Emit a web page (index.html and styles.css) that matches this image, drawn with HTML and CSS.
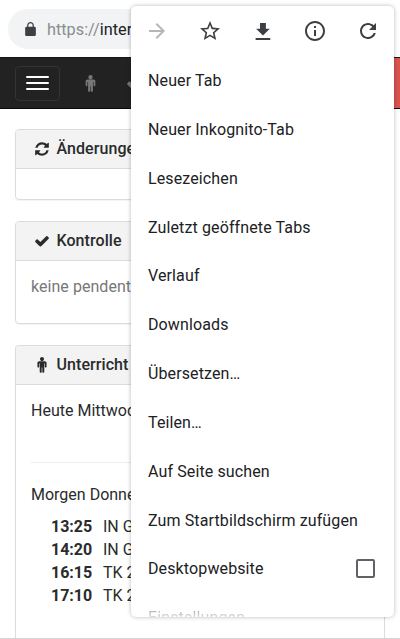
FILE: index.html
```html
<!DOCTYPE html>
<html lang="de">
<head>
<meta charset="utf-8">
<title>Intern</title>
<link rel="stylesheet" href="styles.css">
</head>
<body>
<svg class="defs" aria-hidden="true">
  <symbol id="male" viewBox="0 0 1792 1792"><path d="M1408 672v416q0 40-28 68t-68 28-68-28-28-68v-352h-64v912q0 46-33 79t-79 33-79-33-33-79v-464h-64v464q0 46-33 79t-79 33-79-33-33-79v-912h-64v352q0 40-28 68t-68 28-68-28-28-68v-416q0-80 56-136t136-56h640q80 0 136 56t56 136zm-288-448q0 93-65.500 158.500t-158.500 65.500-158.500-65.500-65.500-158.500 65.500-158.500 158.500-65.500 158.500 65.500 65.500 158.500z"/></symbol>
  <symbol id="check" viewBox="0 0 1792 1792"><path d="M1671 566q0 40-28 68l-724 724-136 136q-28 28-68 28t-68-28l-136-136-362-362q-28-28-28-68t28-68l136-136q28-28 68-28t68 28l294 295 656-657q28-28 68-28t68 28l136 136q28 28 28 68z"/></symbol>
</svg>
<header class="toolbar">
  <div class="address">
    <svg class="lock" viewBox="4 1 16 21"><path d="M18 8h-1V6c0-2.760-2.240-5-5-5S7 3.240 7 6v2H6c-1.100 0-2 .9-2 2v10c0 1.100.9 2 2 2h12c1.100 0 2-.9 2-2V10c0-1.100-.9-2-2-2zM8.900 8V6c0-1.710 1.390-3.100 3.100-3.100s3.100 1.390 3.100 3.100v2z"/></svg>
    <span class="url">https://<b>intern</b></span>
  </div>
</header>
<nav class="navbar">
  <div class="toggle"><i></i><i></i><i></i></div>
  <svg class="nav-icon"><use href="#male"/></svg>
  <svg class="nav-icon"><use href="#check"/></svg>
  <div class="alert"></div>
</nav>
<main class="content">
  <section class="panel changes">
    <h2><svg viewBox="0 0 1792 1792"><path d="M1639 1056q0 5-1 7-64 268-268 434.500t-478 166.500q-146 0-282.500-55t-243.500-157l-129 129q-19 19-45 19t-45-19-19-45v-448q0-26 19-45t45-19h448q26 0 45 19t19 45-19 45l-137 137q71 66 161 102t187 36q134 0 250-65t186-179q11-17 53-117 8-23 30-23h192q13 0 22.500 9.500t9.500 22.500zm25-800v448q0 26-19 45t-45 19h-448q-26 0-45-19t-19-45 19-45l138-138q-148-137-349-137-134 0-250 65t-186 179q-11 17-53 117-8 23-30 23h-199q-13 0-22.500-9.500t-9.500-22.500v-7q65-268 270-434.500t480-166.500q146 0 284 55.500t245 156.500l130-129q19-19 45-19t45 19 19 45z"/></svg>Änderungen</h2>
  </section>
  <section class="panel control">
    <h2><svg><use href="#check"/></svg>Kontrolle</h2>
    <p class="muted">keine pendenten</p>
  </section>
  <section class="panel lessons">
    <h2><svg><use href="#male"/></svg>Unterricht</h2>
    <p class="today">Heute Mittwoch</p>
    <hr>
    <p>Morgen Donnerstag</p>
    <dl>
      <dt>13:25</dt><dd>IN G</dd>
      <dt>14:20</dt><dd>IN G</dd>
      <dt>16:15</dt><dd>TK 2</dd>
      <dt>17:10</dt><dd>TK 2</dd>
    </dl>
  </section>
</main>
<footer class="bottom"></footer>
<aside class="menu">
  <div class="actions">
    <svg class="disabled" viewBox="0 0 24 24"><path d="M12 4l-1.410 1.410L16.170 11H4v2h12.170l-5.580 5.590L12 20l8-8z"/></svg>
    <svg viewBox="0 0 24 24"><path d="M22 9.240l-7.190-.62L12 2 9.190 8.630 2 9.240l5.460 4.730L5.820 21 12 17.270 18.180 21l-1.630-7.030L22 9.240zM12 15.400l-3.760 2.270 1-4.280-3.320-2.880 4.380-.38L12 6.100l1.710 4.040 4.380.38-3.320 2.880 1 4.280L12 15.400z"/></svg>
    <svg viewBox="0 0 24 24"><path d="M18.800 9.700h-3.900V4H9v5.700H5.100l6.900 6.900zM4.600 19v2h14.700v-2z"/></svg>
    <svg viewBox="0 0 24 24"><path d="M11 7h2v2h-2zm0 4h2v6h-2zm1-9C6.480 2 2 6.480 2 12s4.480 10 10 10 10-4.480 10-10S17.520 2 12 2zm0 18c-4.410 0-8-3.590-8-8s3.590-8 8-8 8 3.590 8 8-3.590 8-8 8z"/></svg>
    <svg viewBox="0 0 24 24"><path d="M17.650 6.350C16.200 4.900 14.210 4 12 4c-4.420 0-7.990 3.580-7.990 8s3.570 8 7.990 8c3.730 0 6.840-2.550 7.730-6h-2.080c-.82 2.330-3.040 4-5.650 4-3.310 0-6-2.690-6-6s2.690-6 6-6c1.660 0 3.140.69 4.220 1.780L13 11h7V4l-2.350 2.350z"/></svg>
  </div>
  <ul>
    <li>Neuer Tab</li>
    <li>Neuer Inkognito-Tab</li>
    <li>Lesezeichen</li>
    <li>Zuletzt geöffnete Tabs</li>
    <li>Verlauf</li>
    <li>Downloads</li>
    <li>Übersetzen…</li>
    <li>Teilen…</li>
    <li>Auf Seite suchen</li>
    <li>Zum Startbildschirm zufügen</li>
    <li>Desktopwebsite<span class="box"></span></li>
    <li class="fading">Einstellungen</li>
  </ul>
</aside>
</body>
</html>
```
FILE: styles.css
```css
* { box-sizing: border-box; }
body {
  margin: 0;
  height: 639px;
  overflow: hidden;
  position: relative;
  display: flex;
  flex-direction: column;
  background: #fff;
  color: #292b2c;
  font: 16px/24px Roboto, sans-serif;
}
.defs { position: absolute; width: 0; height: 0; }
svg { fill: currentColor; flex: none; }
p, ul, dl, dd { margin: 0; padding: 0; }
.toolbar { height: 57px; padding: 9px 8px; flex: none; }
.address {
  display: flex;
  align-items: center;
  height: 40px;
  border-radius: 20px;
  background: #f1f3f4;
  padding-left: 17px;
  white-space: nowrap;
}
.lock { width: 11px; height: 14px; color: #3c4043; margin-top: -1px; }
.url { margin-left: 11px; color: #8a8d90; font-size: 16.3px; margin-top: 1px; }
.url b { font-weight: 400; color: #202124; }
.navbar {
  flex: none;
  height: 52px;
  display: flex;
  align-items: center;
  background: #222;
  border-top: 1px solid #161616;
  border-bottom: 1px solid #090909;
  padding-left: 15px;
  color: #777;
}
.toggle {
  width: 45px;
  height: 35px;
  border: 1px solid #333;
  border-radius: 4px;
  display: flex;
  flex-direction: column;
  justify-content: center;
  align-items: center;
  gap: 4px;
}
.toggle i { width: 23px; height: 2px; background: #fff; border-radius: 1px; }
.nav-icon { width: 17px; height: 17px; margin-left: 22px; }
.nav-icon + .nav-icon { margin-left: 27px; }
.alert { align-self: stretch; width: 20px; margin-left: auto; background: #d9534f; }
.content { padding: 19.500px 15px 0; flex: 1; min-height: 0; display: flex; flex-direction: column; gap: 20px; }
.panel { border: 1px solid #dcdcdc; border-radius: 4px; padding: 0 15px; flex: none; box-shadow: 0 1px 1px rgba(0,0,0,.05); overflow: hidden; }
.panel h2 {
  display: flex;
  align-items: center;
  margin: 0 -15px;
  height: 39px;
  padding-left: 18px;
  background: #f3f3f3;
  border-bottom: 1px solid #dcdcdc;
  font-size: 16px;
  font-weight: 500;
  letter-spacing: .07px;
}
.panel h2 svg { width: 16px; height: 16px; margin-right: 6.500px; }
.changes { height: 71.500px; }
.control { height: 103.500px; margin-top: .5px; }
.muted { color: #777; padding-top: 14.500px; letter-spacing: .05px; }
.lessons { height: 294px; margin-top: .5px; flex: 1 0 auto; border-bottom: 0; border-radius: 4px 4px 0 0; }
.today { padding-top: 14.500px; }
hr { border: 0; border-top: 1px solid #eee; margin: 38.500px 0 20px; }
dl { display: grid; grid-template-columns: 42px auto; grid-auto-rows: 23px; column-gap: 10px; line-height: 23px; padding: 8px 0 0 20px; white-space: nowrap; }
dt { font-weight: 700; }
.bottom { height: 1px; flex: none; background: #d4d4d4; }
.menu {
  position: absolute;
  left: 131px;
  top: 6px;
  width: 263px;
  height: 611px;
  overflow: hidden;
  border-radius: 5px;
  background: #fff;
  color: #202124;
  box-shadow: 0 0 4px rgba(0,0,0,.28);
}
.actions { height: 49px; display: flex; justify-content: space-between; align-items: center; padding: 0 14px; color: #3c4043; }
.actions svg { width: 24px; height: 24px; }
.actions .disabled { color: #b5b6b8; }
.menu ul { list-style: none; padding: 1.600px 17px 0; letter-spacing: .12px; }
.menu li { height: 48.850px; display: flex; align-items: center; justify-content: space-between; }
.box { width: 19px; height: 19px; border: 2px solid #5f6368; border-radius: 2px; margin: -2px 2px 0 0; }
.menu .fading { color: transparent; background: linear-gradient(#aaa 15px, #eee 26px); -webkit-background-clip: text; background-clip: text; }
```
